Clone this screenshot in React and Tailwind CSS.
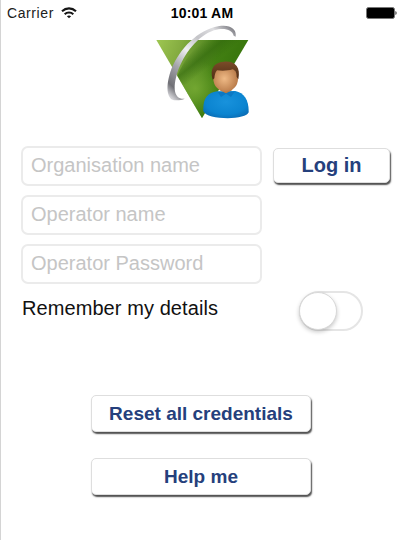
import { useState } from 'react';

const fields = [
  { key: 'organisation', placeholder: 'Organisation name', type: 'text' },
  { key: 'operator', placeholder: 'Operator name', type: 'text' },
  { key: 'password', placeholder: 'Operator Password', type: 'password' },
];

function StatusBar() {
  return (
    <div className="grid h-[23px] grid-cols-[1fr_auto_1fr] items-center pt-[2px] pr-[6px] pl-[6px] text-[14px] leading-5 text-[#202020]">
      <div className="flex items-center gap-[7px]">
        <span className="tracking-[0.6px]">Carrier</span>
        <svg className="h-[12px] w-[16px]" viewBox="0 0 16 12" fill="none" stroke="#151515" strokeWidth="2.1">
          <path d="M1 4.2C5 .4 11 .4 15 4.2" />
          <path d="M3.7 7.2c2.4-2.3 6.2-2.3 8.6 0" />
          <path d="M5.9 9.2c1.2-1.1 3-1.1 4.2 0L8 11.3z" fill="#151515" stroke="none" />
        </svg>
      </div>
      <span className="text-[14px] font-bold tracking-[0.2px] text-black">10:01 AM</span>
      <svg className="h-[12px] w-[31px] justify-self-end" viewBox="0 0 31 12">
        <rect x=".5" y=".5" width="28" height="11" rx="2" fill="#000" stroke="#777" strokeWidth="1" />
        <path d="M29.5 4c1.4.6 1.4 3.4 0 4z" fill="#111" />
      </svg>
    </div>
  );
}

function Logo() {
  return (
    <svg className="ml-[154px] h-[97px] w-[96px]" viewBox="45 69 288 291">
      <defs>
        <linearGradient id="leaf" gradientUnits="userSpaceOnUse" x1="60" y1="110" x2="270" y2="200">
          <stop offset="0" stopColor="#9cc450" />
          <stop offset=".3" stopColor="#84ac40" />
          <stop offset=".55" stopColor="#5e9028" />
          <stop offset=".8" stopColor="#427f12" />
          <stop offset="1" stopColor="#3b780e" />
        </linearGradient>
        <linearGradient id="ring" x1=".9" y1="0" x2=".1" y2="1">
          <stop offset="0" stopColor="#85858b" />
          <stop offset=".14" stopColor="#dedee1" />
          <stop offset=".32" stopColor="#c4c4c8" />
          <stop offset=".5" stopColor="#f0f0f2" />
          <stop offset=".7" stopColor="#a6a6ac" />
          <stop offset=".9" stopColor="#707076" />
          <stop offset="1" stopColor="#d2d2d6" />
        </linearGradient>
        <radialGradient id="face" cx=".45" cy=".5" r=".6">
          <stop offset="0" stopColor="#efba86" />
          <stop offset="1" stopColor="#b47544" />
        </radialGradient>
        <linearGradient id="hair" x1="0" y1="0" x2="0" y2="1">
          <stop offset="0" stopColor="#7a4c28" />
          <stop offset="1" stopColor="#4f2c16" />
        </linearGradient>
        <radialGradient id="shirt" cx=".5" cy=".4" r=".65">
          <stop offset="0" stopColor="#1892dc" />
          <stop offset=".7" stopColor="#0b84d0" />
          <stop offset="1" stopColor="#0a6cb4" />
        </radialGradient>
        <radialGradient id="glow" gradientUnits="userSpaceOnUse" cx="165" cy="265" r="85">
          <stop offset="0" stopColor="#74a832" stopOpacity=".95" />
          <stop offset="1" stopColor="#74a832" stopOpacity="0" />
        </radialGradient>
        <linearGradient id="shade" gradientUnits="userSpaceOnUse" x1="148" y1="158" x2="192" y2="212">
          <stop offset="0" stopColor="#2f660c" stopOpacity="0" />
          <stop offset=".5" stopColor="#2f660c" stopOpacity=".6" />
          <stop offset="1" stopColor="#2f660c" stopOpacity="0" />
        </linearGradient>
      </defs>
      <path d="M49 120H325L186 355z" fill="url(#leaf)" />
      <path d="M49 120H325L186 355z" fill="url(#glow)" />
      <path d="M112 227C132 180 160 145 195 120H325L200 245L128 254z" fill="url(#shade)" />
      <path
        d="M287 110C291 83 264 70 224 81C164 97 111 157 91 216C75 266 82 303 109 301C119 301 127 300 134 296C103 299 97 266 112 218C132 160 174 107 222 91C252 82 277 89 281 107z"
        fill="url(#ring)"
      />
      <path d="M190 333C188 297 202 278 231 274L286 273C313 279 327 301 326 337C320 361 199 361 190 333z" fill="url(#shirt)" />
      <path d="M233 275L243 291L258 281L273 291L284 275L258 277z" fill="#0b78c4" />
      <path d="M240 256H276V271L258 280L239 271z" fill="#b97a40" />
      <ellipse cx="257" cy="236" rx="37" ry="39" fill="url(#face)" />
      <path d="M218 239C209 207 220 188 252 185C285 183 303 201 295 238L290 231C290 218 287 212 278 208C263 213 244 213 231 211C225 217 224 226 223 235z" fill="url(#hair)" />
    </svg>
  );
}

function ActionButton({ children, className }) {
  return (
    <button
      type="button"
      className={`rounded-[5px] border border-[#dedede] bg-white font-bold text-[#25407c] shadow-[1px_2px_1.5px_#505050] ${className}`}
    >
      {children}
    </button>
  );
}

export default function App() {
  const [values, setValues] = useState({ organisation: '', operator: '', password: '' });
  const [remember, setRemember] = useState(false);

  const onChange = (key, value) => {
    setValues((prev) => ({ ...prev, [key]: value }));
  };

  return (
    <main className="h-[540px] w-full overflow-hidden border-l border-[#d4d4d4] bg-white font-['Liberation_Sans',sans-serif]">
      <StatusBar />
      <Logo />

      <form className="mt-[26px] flex items-start gap-[11px] pl-5" onSubmit={(event) => event.preventDefault()}>
        <div className="flex w-[241px] flex-col gap-[9px]">
          {fields.map((field) => (
            <input
              key={field.key}
              type={field.type}
              aria-label={field.placeholder}
              placeholder={field.placeholder}
              value={values[field.key]}
              onChange={(event) => onChange(field.key, event.target.value)}
              className="h-10 w-full rounded-[7px] border-2 border-[#ebebeb] px-2 pb-px text-[20px] outline-none placeholder:text-[#c5c5c5]"
            />
          ))}
        </div>
        <ActionButton className="mt-[2px] h-[35px] w-[117px] pb-px text-[20px]">Log in</ActionButton>
      </form>

      <div className="mt-[7px] flex h-10 items-start justify-between pr-10 pl-[21px]">
        <span className="mt-[3px] text-[20px] leading-7 tracking-[0.08px] text-[#111]">Remember my details</span>
        <button
          type="button"
          role="switch"
          aria-checked={remember}
          aria-label="Remember my details"
          onClick={() => setRemember(!remember)}
          className={`h-10 w-[64px] rounded-full border-2 border-[#e5e5e5] ${remember ? 'bg-green-400' : 'bg-white'}`}
        >
          <span
            className={`-mt-px -ml-[2px] block size-[38px] rounded-full border border-[#d8d8d8] bg-white shadow-[0_2px_4px_#00000038] ${remember ? 'translate-x-[26px]' : ''}`}
          />
        </button>
      </div>

      <div className="mt-[64px] ml-[90px] flex w-[220px] flex-col gap-[26px]">
        <ActionButton className="h-[37px] pt-[2px] text-[19px]">Reset all credentials</ActionButton>
        <ActionButton className="h-[37px] pt-[2px] text-[19px]">Help me</ActionButton>
      </div>
    </main>
  );
}
